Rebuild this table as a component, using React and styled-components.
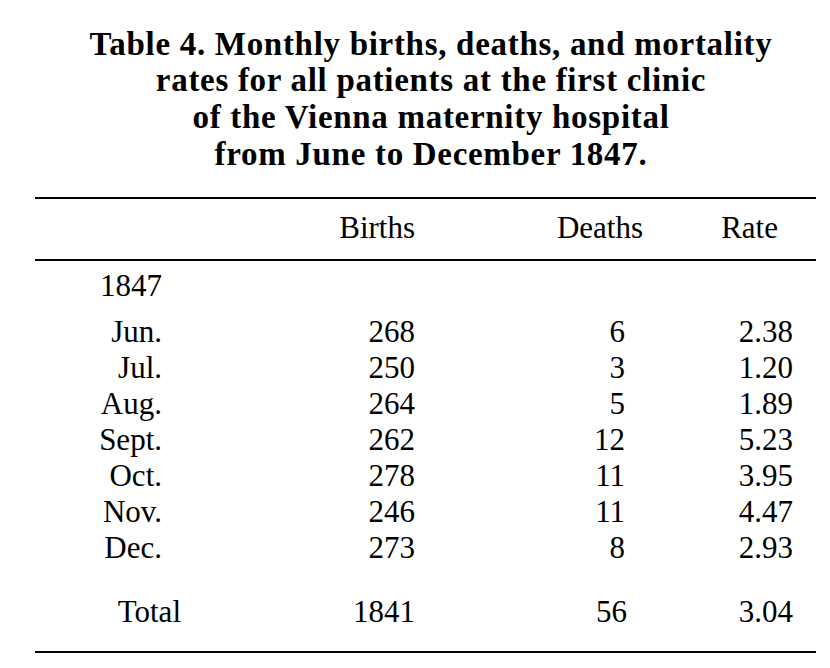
import React from "react";
import styled, { createGlobalStyle } from "styled-components";

const Global = createGlobalStyle`
  html, body { margin: 0; padding: 0; background: #fff; }
  body { font-family: "Liberation Serif", "Times New Roman", serif; color: #000; }
`;

const Page = styled.div`
  width: 830px;
  height: 668px;
  padding-top: 25.5px;
  box-sizing: border-box;
`;

const Title = styled.h1`
  margin: 0 0 0 35px;
  width: 781px;
  padding-left: 11px;
  box-sizing: border-box;
  text-align: center;
  font-family: "Liberation Serif", "Times New Roman", serif;
  font-weight: 700;
  font-size: 33px;
  line-height: 36.7px;
  letter-spacing: 0.7px;
`;

const TitleLine = styled.span`
  display: block;
  white-space: nowrap;
`;

const Table = styled.div`
  margin: 25px 0 0 35px;
  width: 781px;
  border-top: 2px solid #000;
  border-bottom: 2px solid #000;
`;

const HeaderRow = styled.div`
  display: grid;
  grid-template-columns: 127px 253px 228px 150px 23px;
  padding: 10.5px 0 13px;
  border-bottom: 2.5px solid #000;
  font-size: 31px;
  line-height: 36px;
`;

const Row = styled.div`
  display: grid;
  grid-template-columns: 127px 253px 228px 150px 23px;
  font-size: 31px;
  line-height: 36px;
  margin-top: ${(p) => p.$gap || 0}px;
`;

const Cell = styled.div`
  text-align: right;
  white-space: nowrap;
  padding-right: ${(p) => p.$pad || 0}px;
  margin-right: ${(p) => p.$shift || 0}px;
`;

const Body = styled.div`
  padding: 7.5px 0 20.5px;
`;

const rows = [
  ["Jun.", "268", "6", "2.38"],
  ["Jul.", "250", "3", "1.20"],
  ["Aug.", "264", "5", "1.89"],
  ["Sept.", "262", "12", "5.23"],
  ["Oct.", "278", "11", "3.95"],
  ["Nov.", "246", "11", "4.47"],
  ["Dec.", "273", "8", "2.93"],
];

export default function App() {
  return (
    <Page>
      <Global />
      <Title>
        <TitleLine>Table 4. Monthly births, deaths, and mortality</TitleLine>
        <TitleLine>rates for all patients at the first clinic</TitleLine>
        <TitleLine>of the Vienna maternity hospital</TitleLine>
        <TitleLine>from June to December 1847.</TitleLine>
      </Title>
      <Table>
        <HeaderRow>
          <Cell />
          <Cell>Births</Cell>
          <Cell>Deaths</Cell>
          <Cell $pad={15}>Rate</Cell>
          <Cell />
        </HeaderRow>
        <Body>
          <Row>
            <Cell>1847</Cell>
          </Row>
          {rows.map((r, i) => (
            <Row key={r[0]} $gap={i === 0 ? 10 : 0}>
              <Cell>{r[0]}</Cell>
              <Cell>{r[1]}</Cell>
              <Cell $pad={18}>{r[2]}</Cell>
              <Cell>{r[3]}</Cell>
              <Cell />
            </Row>
          ))}
          <Row $gap={28}>
            <Cell $shift={-19}>Total</Cell>
            <Cell>1841</Cell>
            <Cell $pad={16}>56</Cell>
            <Cell>3.04</Cell>
            <Cell />
          </Row>
        </Body>
      </Table>
    </Page>
  );
}
